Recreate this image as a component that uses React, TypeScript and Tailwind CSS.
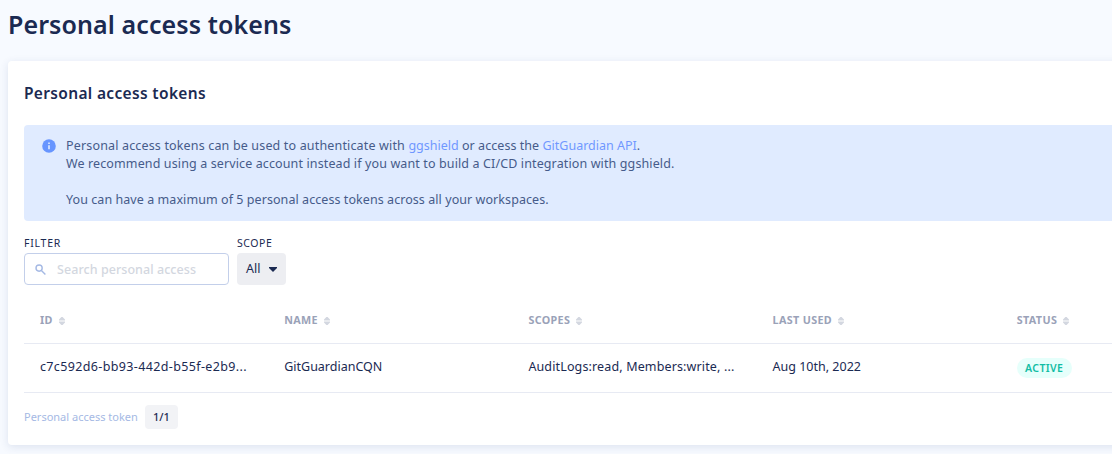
import React from "react";

function SortIcon() {
  return (
    <svg className="mt-0.5 h-2 w-1.5 shrink-0" viewBox="0 0 6 8" fill="#d3d7e0">
      <path d="M0 3.4V2.6L2.4 0H3.6L6 2.6V3.4ZM0 4.6V5.4L2.4 8H3.6L6 5.4V4.6Z" />
    </svg>
  );
}

function Head({ children }: { children: React.ReactNode }) {
  return (
    <div className="flex items-center gap-1.5 px-4 text-[10.75px] font-bold leading-4 tracking-[0.35px] text-[#9aa2b8]">
      <span>{children}</span>
      <SortIcon />
    </div>
  );
}

export default function App() {
  return (
    <main className="h-[454px] w-full overflow-hidden bg-[#f7faff] pl-2 pt-[7px] font-['Noto_Sans',sans-serif] whitespace-nowrap text-[#1b2a52]">
      <h1 className="h-[54px] text-[25px] font-semibold leading-[34px] tracking-[0.09px]">Personal access tokens</h1>
      <section className="h-[384px] w-[1300px] rounded-[4px] bg-white px-4 pt-[22px] shadow-[0_2px_8px_rgba(30,60,120,0.12)]">
        <h2 className="h-[42px] text-[15.5px] font-semibold leading-5 tracking-[0.34px]">Personal access tokens</h2>
        <div className="flex h-24 rounded-[4px] bg-[#e0ebff] pl-[18px] pt-3 text-[12.5px] leading-[18px] text-[#465b8a]">
          <svg className="mt-0.5 mr-[10px] h-[14px] w-[14px] shrink-0" viewBox="0 0 14 14">
            <circle cx="7" cy="7" r="6.8" fill="#6795ff" />
            <path d="M6.2 3.5h1.6V5H6.2ZM6.2 6.2h1.6v4H6.2Z" fill="#e0ebff" />
          </svg>
          <div>
            <p><span className="tracking-[0.16px]">Personal access tokens can be used to authenticate with </span><a className="text-[#7098ff]">ggshield</a><span className="tracking-[0.05px]"> or access the </span><a className="text-[#7098ff]">GitGuardian API</a>.</p>
            <p className="tracking-[0.12px]">We recommend using a service account instead if you want to build a CI/CD integration with ggshield.</p>
            <p className="mt-[18px] tracking-[0.065px]">You can have a maximum of 5 personal access tokens across all your workspaces.</p>
          </div>
        </div>
        <div className="flex gap-2 pt-[15px]">
          <div>
            <div className="h-[17px] text-[10.5px] leading-[14px] tracking-[0.75px]">FILTER</div>
            <div className="flex h-8 w-[205px] items-center rounded-[4px] border border-[#c3cfea] pl-[10px]">
              <svg className="h-[11px] w-[11px]" viewBox="0 0 11 11" fill="none" stroke="#a5b9e4" strokeWidth="1.4">
                <circle cx="4.1" cy="4.1" r="3.1" />
                <path d="m6.4 6.4 4 4" />
              </svg>
              <span className="ml-[11px] pt-0.5 text-[12.5px] font-medium tracking-[0.06px] text-[#d3d7e0]">Search personal access</span>
            </div>
          </div>
          <div>
            <div className="h-[17px] text-[10.5px] leading-[14px] tracking-[0.55px]">SCOPE</div>
            <div className="flex h-8 w-[49px] items-center rounded-[4px] bg-[#edeef2] pl-[9px] text-[12.5px]">
              <span>All</span>
              <svg className="ml-[9px] h-[5px] w-2" viewBox="0 0 8 5" fill="#1b2a52"><path d="M0 0h8v1L4 5 0 1Z" /></svg>
            </div>
          </div>
        </div>
        <div className="mt-3 grid h-[47px] grid-cols-[244.2px_244.2px_244.2px_244.2px_260px] items-center border-b border-[#e7eaf3]">
          <Head>ID</Head><Head>NAME</Head><Head>SCOPES</Head><Head>LAST USED</Head><Head>STATUS</Head>
        </div>
        <div className="grid h-[49px] grid-cols-[244.2px_244.2px_244.2px_244.2px_260px] items-center border-b border-[#e7eaf3] text-[12.5px]">
          <div className="px-4 pb-0.5 tracking-[0.36px]">c7c592d6-bb93-442d-b55f-e2b9...</div>
          <div className="px-4 pb-0.5">GitGuardianCQN</div>
          <div className="px-4 pb-0.5 tracking-[0.14px]">AuditLogs:read, Members:write, ...</div>
          <div className="px-4 pb-0.5">Aug 10th, 2022</div>
          <div className="px-4"><span className="flex h-5 w-[55px] items-center justify-center rounded-full bg-[#e6fffb] pt-px text-[10.5px] font-semibold tracking-[0.4px] text-[#12bda5]">ACTIVE</span></div>
        </div>
        <div className="flex items-center gap-[7px] pt-3">
          <span className="text-[11px] text-[#a5b9e4]">Personal access token</span>
          <span className="flex h-6 w-[33px] items-center justify-center rounded-[4px] bg-[#f2f3f6] text-[11px] font-medium">1/1</span>
        </div>
      </section>
    </main>
  );
}
